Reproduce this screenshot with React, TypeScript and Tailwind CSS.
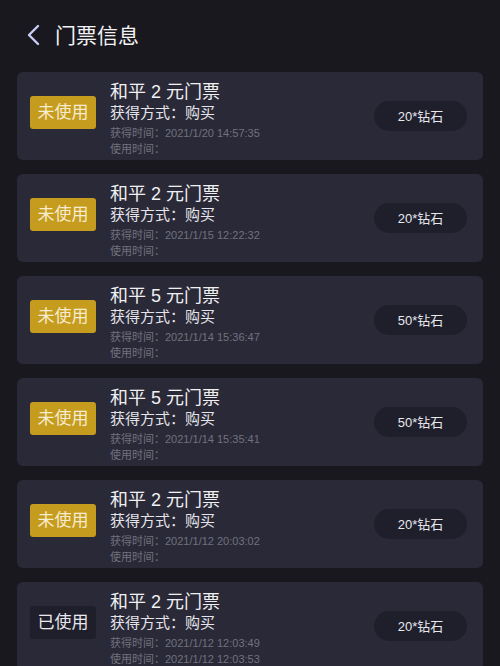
const tickets = [
  { status: '未使用', title: '和平 2 元门票', cost: '20*钻石', got: '2021/1/20 14:57:35', used: '' },
  { status: '未使用', title: '和平 2 元门票', cost: '20*钻石', got: '2021/1/15 12:22:32', used: '' },
  { status: '未使用', title: '和平 5 元门票', cost: '50*钻石', got: '2021/1/14 15:36:47', used: '' },
  { status: '未使用', title: '和平 5 元门票', cost: '50*钻石', got: '2021/1/14 15:35:41', used: '' },
  { status: '未使用', title: '和平 2 元门票', cost: '20*钻石', got: '2021/1/12 20:03:02', used: '' },
  { status: '已使用', title: '和平 2 元门票', cost: '20*钻石', got: '2021/1/12 12:03:49', used: '2021/1/12 12:03:53' },
]

export default function App() {
  return (
    <div
      className="h-[666px] w-[500px] overflow-hidden bg-[#18181e] text-white"
      style={{ fontFamily: '"Liberation Sans", "Noto Sans CJK SC", sans-serif' }}
    >
      <header className="flex h-[72px] items-center pb-[2px] pl-[26px]">
        <svg width="16" height="22" viewBox="0 0 16 22" fill="none" className="mr-[13px]">
          <path d="M12 2 L3 11 L12 20" stroke="#c9cdf5" strokeWidth="2.4" strokeLinecap="round" strokeLinejoin="round" />
        </svg>
        <h1 className="text-[21px] leading-none text-[#f2f2f4]">门票信息</h1>
      </header>

      <div className="flex flex-col gap-[14px] px-[17px]">
        {tickets.map((t, i) => (
          <div key={i} className="flex h-[88px] items-center rounded-[6px] bg-[#2a2937] pl-[13px] pr-[16px]">
            <div
              className={
                'mb-[7px] flex h-[33px] w-[66px] shrink-0 items-center justify-center rounded-[3px] text-[17px] leading-none ' +
                (t.status === '未使用' ? 'bg-[#c69c1f] text-[#f6ecd0]' : 'bg-[#1f1e2b] text-[#e8e8ee]')
              }
            >
              {t.status}
            </div>
            <div className="ml-[14px] flex flex-1 flex-col pt-[5px]">
              <div className="h-[22px] text-[18px] leading-[22px] text-[#f0f0f3]">{t.title}</div>
              <div className="h-[20px] text-[15px] leading-[20px] text-[#e4e4ea]">获得方式：购买</div>
              <div className="mt-[2px] h-[16px] text-[11px] leading-[16px] text-[#72717f]">获得时间：{t.got}</div>
              <div className="h-[16px] text-[11px] leading-[16px] text-[#72717f]">使用时间：{t.used}</div>
            </div>
            <div className="flex h-[30px] w-[93px] items-center justify-center rounded-full bg-[#1f1e2b] text-[13px] leading-none text-[#e8e8ee]">
              {t.cost}
            </div>
          </div>
        ))}
      </div>
    </div>
  )
}
